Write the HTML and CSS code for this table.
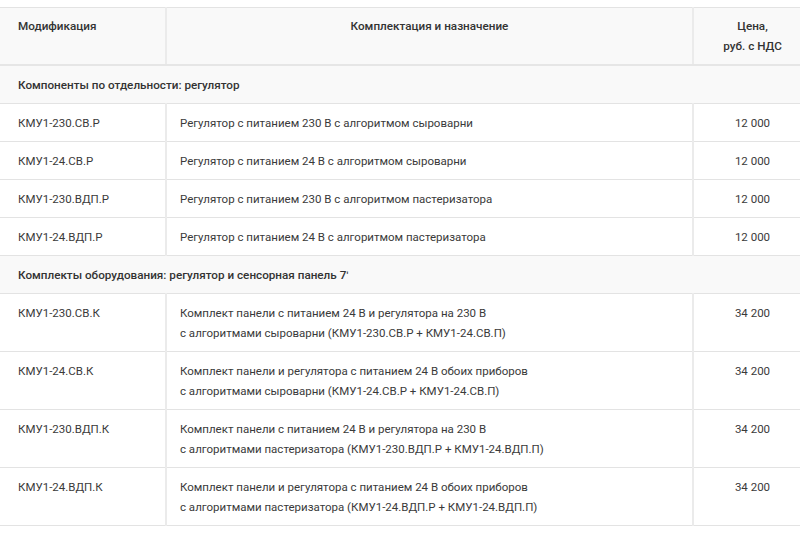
FILE: index.html
```html
<!DOCTYPE html>
<html lang="ru">
<head>
<meta charset="utf-8">
<title>Цены</title>
<link rel="stylesheet" href="styles.css">
</head>
<body>
<table class="price">
  <colgroup>
    <col class="c1"><col class="c2"><col class="c3">
  </colgroup>
  <thead>
    <tr>
      <th class="left">Модификация</th>
      <th>Комплектация и назначение</th>
      <th>Цена,<br>руб. с НДС</th>
    </tr>
  </thead>
  <tbody>
    <tr class="group"><td colspan="3">Компоненты по отдельности: регулятор</td></tr>
    <tr><td>КМУ1-230.СВ.Р</td><td>Регулятор с питанием 230 В с алгоритмом сыроварни</td><td class="num">12 000</td></tr>
    <tr><td>КМУ1-24.СВ.Р</td><td>Регулятор с питанием 24 В с алгоритмом сыроварни</td><td class="num">12 000</td></tr>
    <tr><td>КМУ1-230.ВДП.Р</td><td>Регулятор с питанием 230 В с алгоритмом пастеризатора</td><td class="num">12 000</td></tr>
    <tr><td>КМУ1-24.ВДП.Р</td><td>Регулятор с питанием 24 В с алгоритмом пастеризатора</td><td class="num">12 000</td></tr>
    <tr class="group"><td colspan="3">Комплекты оборудования: регулятор и сенсорная панель 7ʹ</td></tr>
    <tr><td>КМУ1-230.СВ.К</td><td>Комплект панели с питанием 24 В и регулятора на 230 В<br>с алгоритмами сыроварни (КМУ1-230.СВ.Р + КМУ1-24.СВ.П)</td><td class="num">34 200</td></tr>
    <tr><td>КМУ1-24.СВ.К</td><td>Комплект панели и регулятора с питанием 24 В обоих приборов<br>с алгоритмами сыроварни (КМУ1-24.СВ.Р + КМУ1-24.СВ.П)</td><td class="num">34 200</td></tr>
    <tr><td>КМУ1-230.ВДП.К</td><td>Комплект панели с питанием 24 В и регулятора на 230 В<br>с алгоритмами пастеризатора (КМУ1-230.ВДП.Р + КМУ1-24.ВДП.П)</td><td class="num">34 200</td></tr>
    <tr><td>КМУ1-24.ВДП.К</td><td>Комплект панели и регулятора с питанием 24 В обоих приборов<br>с алгоритмами пастеризатора (КМУ1-24.ВДП.Р + КМУ1-24.ВДП.П)</td><td class="num">34 200</td></tr>
  </tbody>
</table>
</body>
</html>
```

FILE: styles.css
```css
html, body {
  margin: 0;
  padding: 0;
  background: #fff;
  overflow: hidden;
}
body {
  font-family: Roboto, "Liberation Sans", Arial, sans-serif;
  font-size: 11.5px;
  color: #3a3a3a;
}
.price {
  margin-top: 7px;
  width: 811px;
  border-collapse: collapse;
  table-layout: fixed;
}
.c1 { width: 166px; }
.c2 { width: 527px; }
.c3 { width: 118px; }
.price th, .price td {
  padding: 9px 13px 8px 13px;
  line-height: 20px;
  vertical-align: top;
  text-align: left;
  border-top: 1px solid #e3e3e3;
  border-bottom: 1px solid #e3e3e3;
  border-left: 2px solid #ebebeb;
}
.price th:first-child, .price td:first-child {
  border-left: none;
  padding-left: 18px;
}
.price thead th {
  background: #f9f9f9;
  font-size: 11.7px;
  font-weight: 500;
  color: #333;
  text-align: center;
  padding-top: 8px;
  padding-bottom: 8px;
  border-bottom: 2px solid #e6e6e6;
}
.price thead th.left {
  text-align: left;
}
.price .group td {
  background: #f9f9f9;
  font-size: 11.7px;
  font-weight: 500;
  color: #333;
}
.price td.num {
  text-align: center;
}
```
